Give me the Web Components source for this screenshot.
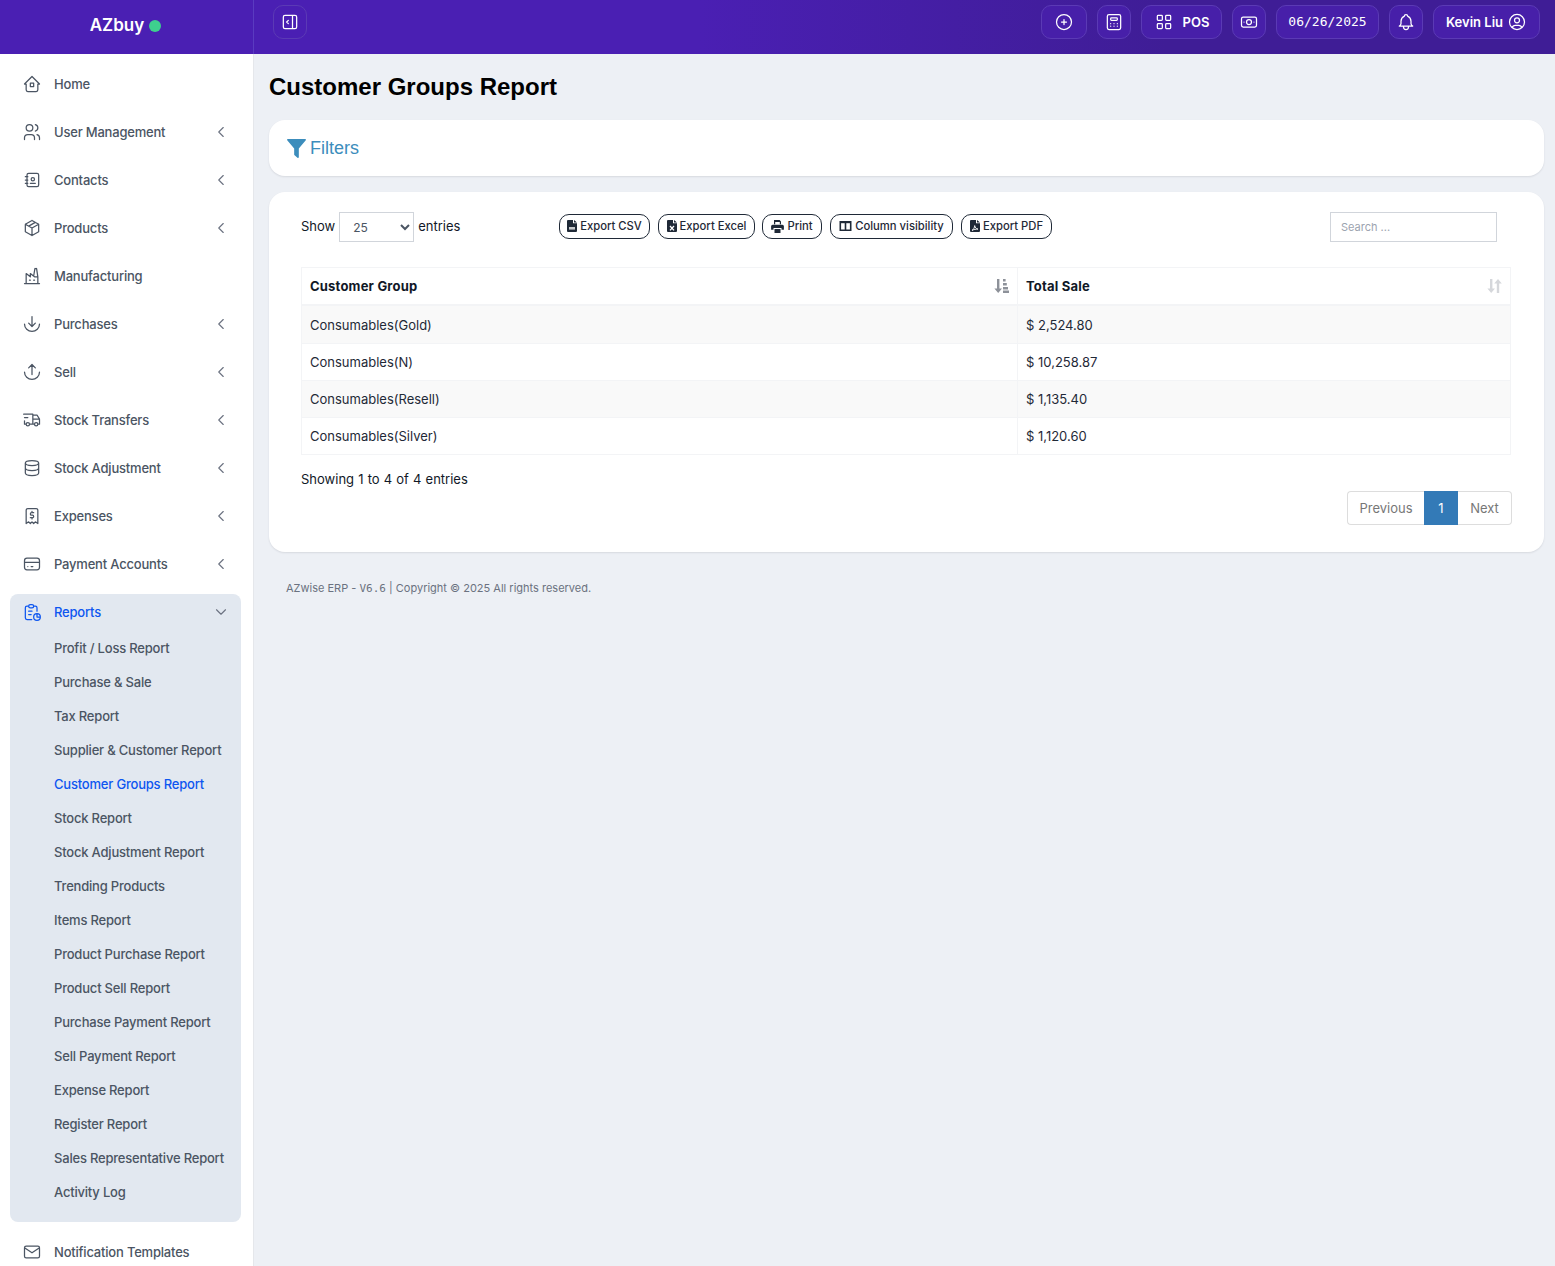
<!DOCTYPE html>
<html lang="en">
<head>
<meta charset="utf-8">
<title>Customer Groups Report</title>
<style>
    html, body { margin: 0; height: 100%; }
    body { font-family: Inter, "Liberation Sans", sans-serif; overflow: hidden; background: #edf0f5; }
</style>
</head>
<body>
<az-shell>
    <az-topbar slot="top"></az-topbar>
    <az-sidebar slot="side">
        <nav-item icon="home">Home</nav-item>
        <nav-item icon="users" arrow>User Management</nav-item>
        <nav-item icon="contacts" arrow>Contacts</nav-item>
        <nav-item icon="package" arrow>Products</nav-item>
        <nav-item icon="factory">Manufacturing</nav-item>
        <nav-item icon="purchase" arrow>Purchases</nav-item>
        <nav-item icon="sell" arrow>Sell</nav-item>
        <nav-item icon="truck" arrow>Stock Transfers</nav-item>
        <nav-item icon="database" arrow>Stock Adjustment</nav-item>
        <nav-item icon="receipt" arrow>Expenses</nav-item>
        <nav-item icon="card" arrow>Payment Accounts</nav-item>
        <nav-group icon="report" label="Reports">
            <sub-item>Profit / Loss Report</sub-item>
            <sub-item>Purchase &amp; Sale</sub-item>
            <sub-item>Tax Report</sub-item>
            <sub-item>Supplier &amp; Customer Report</sub-item>
            <sub-item active>Customer Groups Report</sub-item>
            <sub-item>Stock Report</sub-item>
            <sub-item>Stock Adjustment Report</sub-item>
            <sub-item>Trending Products</sub-item>
            <sub-item>Items Report</sub-item>
            <sub-item>Product Purchase Report</sub-item>
            <sub-item>Product Sell Report</sub-item>
            <sub-item>Purchase Payment Report</sub-item>
            <sub-item>Sell Payment Report</sub-item>
            <sub-item>Expense Report</sub-item>
            <sub-item>Register Report</sub-item>
            <sub-item>Sales Representative Report</sub-item>
            <sub-item>Activity Log</sub-item>
        </nav-group>
        <nav-item icon="mail">Notification Templates</nav-item>
    </az-sidebar>
    <report-page></report-page>
</az-shell>

<script>
// outline icons, 24 box
const ICONS = {
    home: 'M5 12H3l9-9 9 9h-2M5 12v7a2 2 0 0 0 2 2h10a2 2 0 0 0 2-2v-7M10 11h4v4h-4z',
    users: 'M5 7a4 4 0 1 0 8 0a4 4 0 1 0-8 0M3 21v-2a4 4 0 0 1 4-4h4a4 4 0 0 1 4 4v2M16 3.13a4 4 0 0 1 0 7.75M21 21v-2a4 4 0 0 0-3-3.85',
    contacts: 'M20 6v12a2 2 0 0 1-2 2h-10a2 2 0 0 1-2-2v-12a2 2 0 0 1 2-2h10a2 2 0 0 1 2 2zM10 16h6M11 11a2 2 0 1 0 4 0a2 2 0 1 0-4 0M4 8h3M4 12h3M4 16h3',
    package: 'M12 3l8 4.5v9l-8 4.5l-8-4.5v-9l8-4.5M12 12l8-4.5M12 12v9M12 12l-8-4.5M16 5.25l-8 4.5',
    factory: 'M3 21h18M5 21v-12l5 4v-4l5 4h4M19 21v-8l-1.436-9.574a.5 .5 0 0 0-.495-.426h-1.145a.5 .5 0 0 0-.494 .418l-1.43 8.582M9 17h1M14 17h1',
    purchase: 'M3 12a9 9 0 0 0 18 0M12 3v12M8 11l4 4l4-4',
    sell: 'M3 12a9 9 0 0 0 18 0M12 15V3M8 7l4-4l4 4',
    truck: 'M5 17a2 2 0 1 0 4 0a2 2 0 1 0-4 0M15 17a2 2 0 1 0 4 0a2 2 0 1 0-4 0M5 17h-2v-4M2 5h11v12M9 17h6M19 17h2v-6h-8M13 6h5l3 5M3 9h4',
    database: 'M4 6a8 3 0 1 0 16 0a8 3 0 1 0-16 0M4 6v6a8 3 0 0 0 16 0v-6M4 12v6a8 3 0 0 0 16 0v-6',
    receipt: 'M5 21v-16a2 2 0 0 1 2-2h10a2 2 0 0 1 2 2v16l-3-2l-2 2l-2-2l-2 2l-2-2l-3 2M14 8h-2.5a1.5 1.5 0 0 0 0 3h1a1.5 1.5 0 0 1 0 3h-2.5M12 14v1.5M12 6.5V8',
    card: 'M3 8a3 3 0 0 1 3-3h12a3 3 0 0 1 3 3v8a3 3 0 0 1-3 3h-12a3 3 0 0 1-3-3zM3 10h18M7 15h.01M11 15h2',
    report: 'M8 5h-2a2 2 0 0 0-2 2v12a2 2 0 0 0 2 2h5.697M18 14v4h4M18 11v-4a2 2 0 0 0-2-2h-2M8 5a2 2 0 0 1 2-2h2a2 2 0 0 1 2 2a2 2 0 0 1-2 2h-2a2 2 0 0 1-2-2zM14 18a4 4 0 1 0 8 0a4 4 0 1 0-8 0M8 11h4M8 15h3',
    mail: 'M3 7a2 2 0 0 1 2-2h14a2 2 0 0 1 2 2v10a2 2 0 0 1-2 2h-14a2 2 0 0 1-2-2zM3 7l9 6l9-6',
    chevleft: 'M15 6l-6 6l6 6',
    chevdown: 'M6 9l6 6l6-6',
    collapse: 'M4 6a2 2 0 0 1 2-2h12a2 2 0 0 1 2 2v12a2 2 0 0 1-2 2h-12a2 2 0 0 1-2-2zM15 4v16M10 10l-2 2l2 2',
    plus: 'M3 12a9 9 0 1 0 18 0a9 9 0 0 0-18 0M9 12h6M12 9v6',
    calc: 'M4 5a2 2 0 0 1 2-2h12a2 2 0 0 1 2 2v14a2 2 0 0 1-2 2h-12a2 2 0 0 1-2-2zM8 8a1 1 0 0 1 1-1h6a1 1 0 0 1 1 1v1a1 1 0 0 1-1 1h-6a1 1 0 0 1-1-1zM8 14v.01M12 14v.01M16 14v.01M8 17v.01M12 17v.01M16 17v.01',
    grid: 'M4 5a1 1 0 0 1 1-1h4a1 1 0 0 1 1 1v4a1 1 0 0 1-1 1h-4a1 1 0 0 1-1-1zM14 5a1 1 0 0 1 1-1h4a1 1 0 0 1 1 1v4a1 1 0 0 1-1 1h-4a1 1 0 0 1-1-1zM4 15a1 1 0 0 1 1-1h4a1 1 0 0 1 1 1v4a1 1 0 0 1-1 1h-4a1 1 0 0 1-1-1zM14 15a1 1 0 0 1 1-1h4a1 1 0 0 1 1 1v4a1 1 0 0 1-1 1h-4a1 1 0 0 1-1-1z',
    cash: 'M9 12a3 3 0 1 0 6 0a3 3 0 1 0-6 0M3 8a2 2 0 0 1 2-2h14a2 2 0 0 1 2 2v8a2 2 0 0 1-2 2h-14a2 2 0 0 1-2-2zM18 12h.01M6 12h.01',
    bell: 'M10 5a2 2 0 1 1 4 0a7 7 0 0 1 4 6v3a4 4 0 0 0 2 3h-16a4 4 0 0 0 2-3v-3a7 7 0 0 1 4-6M9 17v1a3 3 0 0 0 6 0v-1',
    user: 'M3 12a9 9 0 1 0 18 0a9 9 0 1 0-18 0M9 10a3 3 0 1 0 6 0a3 3 0 1 0-6 0M6.168 18.849a4 4 0 0 1 3.832-2.849h4a4 4 0 0 1 3.834 2.855'
};

const svg = (name, size, width = 1.5) => `<svg width="${size}" height="${size}" viewBox="0 0 24 24" fill="none" stroke="currentColor" stroke-width="${width}" stroke-linecap="round" stroke-linejoin="round" style="display:block;flex:none"><path d="${ICONS[name]}"/></svg>`;

// solid icons for the export buttons
const fileIcon = (mark) => `<svg width="10" height="12" viewBox="0 0 10 12" style="display:block;flex:none"><path fill="#1f2937" d="M1 0h5v3.2h4V11a1 1 0 0 1-1 1H1a1 1 0 0 1-1-1V1a1 1 0 0 1 1-1zM7 0l3 2.4H7z"/>${mark}</svg>`;
const SOLID = {
    csv: fileIcon('<path fill="#fff" d="M2 7h6v2.6H2z" opacity=".75"/>'),
    excel: fileIcon('<path stroke="#fff" stroke-width="1.3" d="M3 6l4 4.4M7 6l-4 4.4"/>'),
    pdf: fileIcon('<path fill="none" stroke="#fff" stroke-width=".9" d="M2 10.4c1.6-.8 2.6-3 2.7-4.8c.4 2 1.4 3.2 3.3 3.5c-2 0-4.2.3-6 1.300z"/>'),
    print: '<svg width="13" height="13" viewBox="0 0 13 13" style="display:block;flex:none"><path fill="#1f2937" d="M3 0h5.600L10 1.400V4.300H8.800V2H4.200v2.300H3zM1.600 4.800h9.800a1.500 1.500 0 0 1 1.500 1.500v3.400h-2.400v-1.600H2.500v1.600H.1V6.300a1.500 1.500 0 0 1 1.500-1.500zM3.500 9h6v4h-6z"/></svg>',
    columns: '<svg width="13" height="12" viewBox="0 0 13 12" style="display:block;flex:none"><path fill="none" stroke="#1f2937" stroke-width="1.600" d="M1.300 1.800h10.400v8.400H1.300zM6.500 1.800v8.400"/><path fill="#1f2937" d="M1 1h11v2.200H1z"/></svg>'
};

class AzShell extends HTMLElement {
    constructor() {
        super();
        this.attachShadow({ mode: 'open' });
        this.shadowRoot.innerHTML = `
            <style>
                :host { display: flex; flex-direction: column; height: 100vh; overflow: hidden; }
                .body { display: flex; flex: 1; min-height: 0; }
            </style>
            <slot name="top"></slot>
            <div class="body">
                <slot name="side"></slot>
                <slot></slot>
            </div>
        `;
    }
}

class AzTopbar extends HTMLElement {
    constructor() {
        super();
        this.attachShadow({ mode: 'open' });
        this.shadowRoot.innerHTML = `
            <style>
                :host { display: flex; height: 54px; flex: none; color: #fff; background: linear-gradient(to right, #4a1fb3 0%, #4a1fb3 45%, #3f1d96 75%, #3f1d96 100%); }
                .logo { width: 251px; padding-right: 2px; border-right: 1px solid #5a3bc0; display: flex; align-items: center; justify-content: center; gap: 5px; padding-bottom: 4px; box-sizing: content-box; font-size: 17px; font-weight: 600; }
                .dot { width: 12px; height: 12px; border-radius: 50%; background: #3ecf8e; margin-top: 1px; }
                .bar { flex: 1; display: flex; align-items: flex-start; padding: 5px 15px 0 19px; gap: 10px; }
                .btn { height: 34px; box-sizing: border-box; border: 1px solid #5b3ab5; border-radius: 10px; background: #471fa9; display: flex; align-items: center; justify-content: center; gap: 8px; font-size: 13px; font-weight: 600; }
                .sq { width: 34px; }
                .collapse { background: transparent; margin-right: auto; }
                .date { width: 103px; padding-bottom: 2px; font: 500 13px "DejaVu Sans Mono", monospace; }
            </style>
            <div class="logo"><span>AZbuy</span><span class="dot"></span></div>
            <div class="bar">
                <div class="btn sq collapse">${svg('collapse', 20)}</div>
                <div class="btn" style="width:46px">${svg('plus', 20)}</div>
                <div class="btn sq">${svg('calc', 20)}</div>
                <div class="btn" style="width:81px;gap:9px">${svg('grid', 20)}<span>POS</span></div>
                <div class="btn sq">${svg('cash', 20)}</div>
                <div class="btn date">06/26/2025</div>
                <div class="btn sq">${svg('bell', 20)}</div>
                <div class="btn" style="width:107px;gap:4px"><span>Kevin Liu</span>${svg('user', 20)}</div>
            </div>
        `;
    }
}

class AzSidebar extends HTMLElement {
    constructor() {
        super();
        this.attachShadow({ mode: 'open' });
        this.shadowRoot.innerHTML = `
            <style>
                :host { display: flex; flex-direction: column; gap: 12px; flex: none; width: 231px; padding: 12px 12px 0 10px; border-right: 1px solid #e5e7eb; background: #fff; overflow: hidden; font-size: 13px; font-weight: 500; letter-spacing: -.2px; color: #4b5563; }
            </style>
            <slot></slot>
        `;
    }
}

class NavItem extends HTMLElement {
    constructor() {
        super();
        this.attachShadow({ mode: 'open' });
        this.shadowRoot.innerHTML = `
            <style>
                :host { display: flex; align-items: center; height: 36px; flex: none; padding: 0 11px 0 12px; gap: 12px; }
                .label { flex: 1; white-space: nowrap; }
                .chev { color: #6b7280; }
            </style>
            ${svg(this.getAttribute('icon'), 20)}
            <span class="label"><slot></slot></span>
            ${this.hasAttribute('arrow') ? `<div class="chev">${svg('chevleft', 18)}</div>` : ''}
        `;
    }
}

class NavGroup extends HTMLElement {
    constructor() {
        super();
        this.attachShadow({ mode: 'open' });
        this.shadowRoot.innerHTML = `
            <style>
                :host { display: block; flex: none; background: #e2e8f0; border-radius: 8px; padding-bottom: 13px; }
                .head { display: flex; align-items: center; height: 36px; padding: 0 11px 0 12px; gap: 12px; color: #0d56f0; }
                .head span { flex: 1; }
                .chev { color: #6b7280; }
                .list { display: flex; flex-direction: column; margin-top: 1px; }
            </style>
            <div class="head">
                ${svg(this.getAttribute('icon'), 20)}
                <span>${this.getAttribute('label')}</span>
                <div class="chev">${svg('chevdown', 18)}</div>
            </div>
            <div class="list"><slot></slot></div>
        `;
    }
}

class SubItem extends HTMLElement {
    constructor() {
        super();
        this.attachShadow({ mode: 'open' });
        this.shadowRoot.innerHTML = `
            <style>
                :host { display: flex; align-items: center; height: 34px; padding-left: 44px; white-space: nowrap; }
                :host([active]) { color: #0d56f0; }
            </style>
            <slot></slot>
        `;
    }
}

class AzCard extends HTMLElement {
    constructor() {
        super();
        this.attachShadow({ mode: 'open' });
        this.shadowRoot.innerHTML = `
            <style>
                :host { display: block; background: #fff; border-radius: 16px; box-shadow: 0 1px 2px rgba(15, 23, 42, .1); }
            </style>
            <slot></slot>
        `;
    }
}

class ExportButton extends HTMLElement {
    constructor() {
        super();
        this.attachShadow({ mode: 'open' });
        this.shadowRoot.innerHTML = `
            <style>
                :host { display: flex; align-items: center; justify-content: center; gap: 3px; height: 25px; box-sizing: border-box; border: 1px solid #1f2937; border-radius: 10px; font-size: 11.25px; font-weight: 500; color: #1f2937; white-space: nowrap; }
            </style>
            ${SOLID[this.getAttribute('icon')]}
            <slot></slot>
        `;
    }
}

class ReportTable extends HTMLElement {
    constructor() {
        super();
        this.attachShadow({ mode: 'open' });
        const rows = [
            ['Consumables(Gold)', '$ 2,524.80'],
            ['Consumables(N)', '$ 10,258.87'],
            ['Consumables(Resell)', '$ 1,135.40'],
            ['Consumables(Silver)', '$ 1,120.60']
        ];
        this.shadowRoot.innerHTML = `
            <style>
                :host { display: block; }
                table { width: 1210px; table-layout: fixed; border-collapse: collapse; font-size: 13px; color: #1f2937; }
                th, td { border: 1px solid #f3f4f6; padding: 0 8px; text-align: left; }
                th { height: 36px; border-bottom: 2px solid #f3f4f6; font-weight: 700; letter-spacing: .2px; color: #111827; }
                td { height: 36px; }
                tbody tr:first-child td { height: 37px; }
                tbody tr:nth-child(odd) { background: #f9f9f9; }
                .th { display: flex; align-items: center; justify-content: space-between; }
            </style>
            <table>
                <colgroup><col style="width:716px"><col></colgroup>
                <thead>
                    <tr>
                        <th><div class="th">Customer Group
                            <svg width="15" height="14" viewBox="0 0 15 14"><path fill="#8d9199" d="M3 0h2.400v9.500H8L4.200 14L.4 9.500H3zM9 0h2.600v2.600H9zM9 4h3.800v2.600H9zM9 8h5v2.600H9zM9 11.400h6V14H9z"/></svg>
                        </div></th>
                        <th><div class="th">Total Sale
                            <svg width="15" height="14" viewBox="0 0 15 14"><path fill="#d5d7db" d="M3 0h2.400v9.500H8L4.200 14L.4 9.500H3zM9.800 14h2.400V4.500h2.600L11 0L7.200 4.500h2.600z"/></svg>
                        </div></th>
                    </tr>
                </thead>
                <tbody>
                    ${rows.map(row => `<tr><td>${row[0]}</td><td>${row[1]}</td></tr>`).join('')}
                </tbody>
            </table>
        `;
    }
}

class PagerBar extends HTMLElement {
    constructor() {
        super();
        this.attachShadow({ mode: 'open' });
        this.shadowRoot.innerHTML = `
            <style>
                :host { display: flex; justify-content: flex-end; font-size: 13px; color: #777; }
                a { display: block; height: 34px; box-sizing: border-box; line-height: 32px; text-align: center; border: 1px solid #ddd; background: #fff; }
                .prev { width: 77px; border-radius: 4px 0 0 4px; border-right: 0; }
                .next { width: 54px; border-radius: 0 4px 4px 0; border-left: 0; }
                .on { width: 34px; background: #337ab7; border-color: #337ab7; color: #fff; }
            </style>
            <a class="prev">Previous</a><a class="on">1</a><a class="next">Next</a>
        `;
    }
}

class ReportPage extends HTMLElement {
    constructor() {
        super();
        this.attachShadow({ mode: 'open' });
        this.shadowRoot.innerHTML = `
            <style>
                :host { display: block; flex: 1; min-width: 0; padding: 0 11px 0 15px; color: #111827; font-size: 13px; }
                h1 { margin: 0; padding: 18px 0; font: 700 24px/30px "Liberation Sans", sans-serif; color: #000; }
                .filters { display: flex; align-items: center; gap: 4px; height: 56px; padding-left: 18px; font: 18px "Liberation Sans", sans-serif; color: #3c8dbc; }
                .stack { display: flex; flex-direction: column; gap: 16px; }
                .inner { padding: 20px 32px 27px; height: 313px; box-sizing: content-box; }
                .tools { display: flex; align-items: center; height: 30px; margin-bottom: 25px; }
                .len { display: flex; align-items: center; gap: 4px; width: 258px; }
                .len span { margin-bottom: 2px; }
                select { width: 75px; height: 30px; border: 1px solid #d1d5db; border-radius: 0; background: #fff; padding: 0 0 0 9px; font: 12px Inter, sans-serif; color: #4b5563; outline: none; }
                .btns { display: flex; gap: 8px; margin-top: -2px; }
                input { width: 167px; height: 30px; box-sizing: border-box; margin: 0 15px 0 auto; border: 1px solid #d1d5db; padding: 0 10px; font: 11px Inter, sans-serif; outline: none; }
                input::placeholder { color: #9ca3af; }
                .info { margin: 16px 0 3px; line-height: 17px; word-spacing: .5px; }
                footer { padding: 28px 0 0 17px; font-size: 11px; line-height: 16px; color: #6b7280; }
                code { font: 11px "DejaVu Sans Mono", monospace; }
            </style>
            <h1>Customer Groups Report</h1>
            <div class="stack">
                <az-card>
                    <div class="filters">
                        <svg width="19" height="19" viewBox="0 0 18 18"><path fill="#3c8dbc" d="M.8 0h16.400c.7 0 1 .8.600 1.300L11.200 9v8.200c0 .7-.8 1-1.300.6L7.200 15.500c-.2-.2-.4-.4-.4-.7V9L.2 1.300C-.2.800.100 0 .8 0z"/></svg>
                        <span>Filters</span>
                    </div>
                </az-card>
                <az-card>
                    <div class="inner">
                        <div class="tools">
                            <div class="len"><span>Show</span> <select><option>25</option></select> <span>entries</span></div>
                            <div class="btns">
                                <export-button icon="csv" style="width:91px">Export CSV</export-button>
                                <export-button icon="excel" style="width:97px">Export Excel</export-button>
                                <export-button icon="print" style="width:60px;margin-left:-1px">Print</export-button>
                                <export-button icon="columns" style="width:123px">Column visibility</export-button>
                                <export-button icon="pdf" style="width:91px">Export PDF</export-button>
                            </div>
                            <input placeholder="Search ...">
                        </div>
                        <report-table></report-table>
                        <div class="info">Showing 1 to 4 of 4 entries</div>
                        <pager-bar></pager-bar>
                    </div>
                </az-card>
            </div>
            <footer>AZwise ERP - <code>V6.6</code> | Copyright © 2025 All rights reserved.</footer>
        `;
    }
}

window.customElements.define('az-shell', AzShell);
window.customElements.define('az-topbar', AzTopbar);
window.customElements.define('az-sidebar', AzSidebar);
window.customElements.define('nav-item', NavItem);
window.customElements.define('nav-group', NavGroup);
window.customElements.define('sub-item', SubItem);
window.customElements.define('az-card', AzCard);
window.customElements.define('export-button', ExportButton);
window.customElements.define('report-table', ReportTable);
window.customElements.define('pager-bar', PagerBar);
window.customElements.define('report-page', ReportPage);
</script>
</body>
</html>
